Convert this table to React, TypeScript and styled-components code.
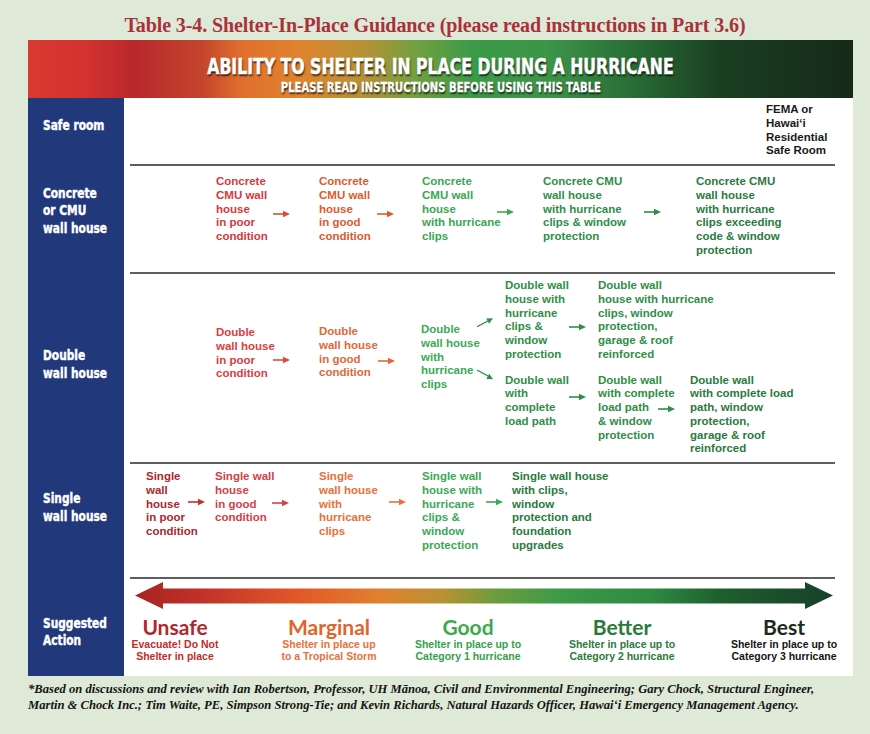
import React from "react";
import styled, { createGlobalStyle } from "styled-components";

const NAVY = "#21387a";

const GlobalStyle = createGlobalStyle`
  html, body {
    margin: 0;
    padding: 0;
    background: #dfe9d7;
  }
  body {
    width: 870px;
    height: 734px;
    overflow: hidden;
    font-family: "Liberation Sans", Arial, sans-serif;
  }
`;

const Page = styled.div`
  width: 870px;
  height: 734px;
  display: flex;
  flex-direction: column;
`;

const Title = styled.h1`
  margin: 0;
  height: 40px;
  box-sizing: border-box;
  padding-top: 10px;
  text-align: center;
  font-family: "Liberation Serif", "Times New Roman", serif;
  font-weight: bold;
  font-size: 20px;
  line-height: 30px;
  letter-spacing: -0.1px;
  color: #a8323a;
`;

const Figure = styled.section`
  margin-left: 28px;
  width: 825px;
  display: flex;
  flex-direction: column;
`;

const Band = styled.header`
  height: 58px;
  box-sizing: border-box;
  padding-top: 16px;
  display: flex;
  flex-direction: column;
  align-items: center;
  background: linear-gradient(
    90deg,
    #d83a30 0%,
    #d4322e 7%,
    #b8282c 13%,
    #c4442c 21%,
    #e0702e 26%,
    #e0842e 33%,
    #b49236 41%,
    #72a040 47%,
    #3a9a48 54%,
    #3d9548 63%,
    #276a34 74%,
    #1a3e22 84%,
    #152a18 100%
  );
`;

const BandTitle = styled.div`
  font-family: "DejaVu Sans", sans-serif;
  font-weight: bold;
  font-size: 21.5px;
  line-height: 22px;
  color: #fff;
  white-space: nowrap;
  transform: scaleX(0.73);
  -webkit-text-stroke: 0.5px #fff;
  text-shadow: 1px 2px 2px rgba(0, 0, 0, 0.75);
`;

const BandSub = styled(BandTitle)`
  margin-top: 2px;
  font-size: 13.5px;
  line-height: 14px;
  transform: scaleX(0.745);
  -webkit-text-stroke: 0.3px #fff;
`;

const Row = styled.div<{ $h: number }>`
  display: grid;
  grid-template-columns: 96px 729px;
  height: ${(p) => p.$h}px;
`;

const Label = styled.div<{ $pt?: number; $pb?: number }>`
  background: ${NAVY};
  display: flex;
  align-items: center;
  box-sizing: border-box;
  padding: ${(p) => p.$pt ?? 0}px 0 ${(p) => p.$pb ?? 0}px 15px;
`;

const LabelText = styled.span`
  display: inline-block;
  white-space: pre;
  color: #fff;
  font-family: "DejaVu Sans", sans-serif;
  font-weight: bold;
  font-size: 14px;
  line-height: 17.5px;
  -webkit-text-stroke: 0.45px #fff;
  transform: scaleX(0.76);
  transform-origin: left center;
`;

const Cell = styled.div`
  background: #fff;
  display: flex;
  flex-direction: column;
  min-width: 0;
`;

const Rule = styled.div`
  flex: none;
  height: 2px;
  margin: 0 18px 0 6px;
  background: #5e5e5e;
`;

const Body = styled.div<{ $pl?: number; $pt?: number }>`
  display: flex;
  align-items: flex-start;
  padding: ${(p) => p.$pt ?? 0}px 0 0 ${(p) => p.$pl ?? 0}px;
`;

const Step = styled.div<{ $w?: number; $c: string; $top?: number }>`
  flex: none;
  width: ${(p) => (p.$w ? `${p.$w}px` : "auto")};
  margin-top: ${(p) => p.$top ?? 0}px;
  color: ${(p) => p.$c};
  white-space: pre;
  font-family: "Liberation Sans", Arial, sans-serif;
  font-weight: bold;
  font-size: 11.5px;
  line-height: 13.75px;
`;

const Slot = styled.div<{ $w: number; $top: number; $pl?: number }>`
  flex: none;
  box-sizing: border-box;
  width: ${(p) => p.$w}px;
  padding: ${(p) => p.$top}px 0 0 ${(p) => p.$pl ?? 0}px;
  display: flex;
  svg {
    display: block;
  }
`;

const Branches = styled.div`
  display: flex;
  flex-direction: column;
  margin-top: 5px;
`;

const Branch = styled.div<{ $top?: number }>`
  display: flex;
  align-items: flex-start;
  margin-top: ${(p) => p.$top ?? 0}px;
`;

const Outcomes = styled.div`
  display: flex;
  margin-top: 7px;
`;

const Outcome = styled.div<{ $w: number }>`
  flex: none;
  width: ${(p) => p.$w}px;
  display: flex;
  flex-direction: column;
  align-items: center;
`;

const Verdict = styled.div<{ $c: string }>`
  color: ${(p) => p.$c};
  font-family: Lato, "Liberation Sans", sans-serif;
  font-weight: 700;
  font-size: 21px;
  line-height: 22px;
  white-space: nowrap;
`;

const Advice = styled.div<{ $c: string }>`
  color: ${(p) => p.$c};
  font-family: "Liberation Sans", Arial, sans-serif;
  font-weight: bold;
  font-size: 10.5px;
  line-height: 12px;
  white-space: pre;
  text-align: center;
`;

const Footnote = styled.p`
  margin: 5px 0 0 28px;
  white-space: pre;
  color: #141414;
  font-family: "Liberation Serif", "Times New Roman", serif;
  font-style: italic;
  font-weight: bold;
  font-size: 12.6px;
  line-height: 16px;
`;

const Arrow: React.FC<{ c: string }> = ({ c }) => (
  <svg width="17" height="8" viewBox="0 0 17 8">
    <path d="M0 4H11" stroke={c} strokeWidth="1.6" />
    <path d="M10 0.8L17 4L10 7.2Z" fill={c} />
  </svg>
);

const Fork: React.FC<{ c: string }> = ({ c }) => (
  <svg width="17" height="66" viewBox="0 0 17 66">
    <path d="M0 10.7L11 5" stroke={c} strokeWidth="1.4" />
    <path d="M16 2.3L12.1 7.8L9.3 2.4Z" fill={c} />
    <path d="M0 54L11 60" stroke={c} strokeWidth="1.4" />
    <path d="M16 63.3L9.3 62.9L12.3 57.7Z" fill={c} />
  </svg>
);

const BigArrow = () => (
  <svg width="698" height="27" viewBox="0 0 698 27" style={{ margin: "3px 0 0 11px", display: "block" }}>
    <defs>
      <linearGradient id="scale" x1="0" x2="1" y1="0" y2="0">
        <stop offset="0" stopColor="#a52520" />
        <stop offset="0.09" stopColor="#c0302a" />
        <stop offset="0.24" stopColor="#e25a28" />
        <stop offset="0.35" stopColor="#e0802e" />
        <stop offset="0.44" stopColor="#b89232" />
        <stop offset="0.52" stopColor="#6a9c3e" />
        <stop offset="0.61" stopColor="#3c9a48" />
        <stop offset="0.74" stopColor="#2e8a42" />
        <stop offset="0.84" stopColor="#1e5e2c" />
        <stop offset="1" stopColor="#17402a" />
      </linearGradient>
    </defs>
    <polygon
      points="0,13.5 28,0 28,6.5 670,6.5 670,0 698,13.5 670,27 670,21.5 28,21.5 28,27"
      fill="url(#scale)"
    />
  </svg>
);

const RED = "#d23a3e";
const DEEP_RED = "#a82a2a";
const ROSE = "#d24048";
const ORANGE = "#e0592e";
const AMBER = "#e8703a";
const GREEN = "#3aa652";
const MID_GREEN = "#2f8e48";
const DARK_GREEN = "#2a7a40";

export default function App() {
  return (
    <Page>
      <GlobalStyle />
      <Title>Table 3-4. Shelter-In-Place Guidance (please read instructions in Part 3.6)</Title>
      <Figure>
        <Band>
          <BandTitle>ABILITY TO SHELTER IN PLACE DURING A HURRICANE</BandTitle>
          <BandSub>PLEASE READ INSTRUCTIONS BEFORE USING THIS TABLE</BandSub>
        </Band>

        <Row $h={66}>
          <Label $pb={10}>
            <LabelText>Safe room</LabelText>
          </Label>
          <Cell>
            <Body $pl={642} $pt={5}>
              <Step $c="#1a1a1a">{"FEMA or\nHawai‘i\nResidential\nSafe Room"}</Step>
            </Body>
          </Cell>
        </Row>

        <Row $h={108}>
          <Label $pb={14}>
            <LabelText>{"Concrete\nor CMU\nwall house"}</LabelText>
          </Label>
          <Cell>
            <Rule />
            <Body $pl={92} $pt={9}>
              <Step $w={57} $c={RED}>{"Concrete\nCMU wall\nhouse\nin poor\ncondition"}</Step>
              <Slot $w={46} $top={35}>
                <Arrow c="#e04a3a" />
              </Slot>
              <Step $w={58} $c={ORANGE}>{"Concrete\nCMU wall\nhouse\nin good\ncondition"}</Step>
              <Slot $w={45} $top={35}>
                <Arrow c={ORANGE} />
              </Slot>
              <Step $w={75} $c={GREEN}>{"Concrete\nCMU wall\nhouse\nwith hurricane\nclips"}</Step>
              <Slot $w={46} $top={33}>
                <Arrow c={GREEN} />
              </Slot>
              <Step $w={101} $c={MID_GREEN}>
                {"Concrete CMU\nwall house\nwith hurricane\nclips & window\nprotection"}
              </Step>
              <Slot $w={52} $top={33}>
                <Arrow c={MID_GREEN} />
              </Slot>
              <Step $c={DARK_GREEN}>
                {"Concrete CMU\nwall house\nwith hurricane\nclips exceeding\ncode & window\nprotection"}
              </Step>
            </Body>
          </Cell>
        </Row>

        <Row $h={190}>
          <Label $pb={5}>
            <LabelText>{"Double\nwall house"}</LabelText>
          </Label>
          <Cell>
            <Rule />
            <Body $pl={92}>
              <Step $w={57} $c="#d8403e" $top={52}>
                {"Double\nwall house\nin poor\ncondition"}
              </Step>
              <Slot $w={46} $top={82}>
                <Arrow c="#e04a3a" />
              </Slot>
              <Step $w={58} $c="#e06838" $top={51}>
                {"Double\nwall house\nin good\ncondition"}
              </Step>
              <Slot $w={44} $top={83} $pl={1}>
                <Arrow c="#e06838" />
              </Slot>
              <Step $w={56} $c="#3aaa55" $top={49}>
                {"Double\nwall house\nwith\nhurricane\nclips"}
              </Step>
              <Slot $w={28} $top={42}>
                <Fork c={MID_GREEN} />
              </Slot>
              <Branches>
                <Branch>
                  <Step $w={64} $c={MID_GREEN}>
                    {"Double wall\nhouse with\nhurricane\nclips &\nwindow\nprotection"}
                  </Step>
                  <Slot $w={29} $top={44}>
                    <Arrow c={MID_GREEN} />
                  </Slot>
                  <Step $c={MID_GREEN}>
                    {"Double wall\nhouse with hurricane\nclips, window\nprotection,\ngarage & roof\nreinforced"}
                  </Step>
                </Branch>
                <Branch $top={12}>
                  <Step $w={64} $c={MID_GREEN}>{"Double wall\nwith\ncomplete\nload path"}</Step>
                  <Slot $w={29} $top={19}>
                    <Arrow c={MID_GREEN} />
                  </Slot>
                  <Step $w={60} $c={MID_GREEN}>
                    {"Double wall\nwith complete\nload path\n& window\nprotection"}
                  </Step>
                  <Slot $w={32} $top={31}>
                    <Arrow c={MID_GREEN} />
                  </Slot>
                  <Step $c={DARK_GREEN}>
                    {"Double wall\nwith complete load\npath, window\nprotection,\ngarage & roof\nreinforced"}
                  </Step>
                </Branch>
              </Branches>
            </Body>
          </Cell>
        </Row>

        <Row $h={115}>
          <Label $pb={24}>
            <LabelText>{"Single\nwall house"}</LabelText>
          </Label>
          <Cell>
            <Rule />
            <Body $pl={22} $pt={6}>
              <Step $w={42} $c={DEEP_RED}>{"Single\nwall\nhouse\nin poor\ncondition"}</Step>
              <Slot $w={27} $top={28}>
                <Arrow c="#c43030" />
              </Slot>
              <Step $w={57} $c={ROSE}>{"Single wall\nhouse\nin good\ncondition"}</Step>
              <Slot $w={47} $top={29}>
                <Arrow c={ROSE} />
              </Slot>
              <Step $w={70} $c={AMBER}>{"Single\nwall house\nwith\nhurricane\nclips"}</Step>
              <Slot $w={33} $top={28}>
                <Arrow c={AMBER} />
              </Slot>
              <Step $w={64} $c="#3aa858">
                {"Single wall\nhouse with\nhurricane\nclips &\nwindow\nprotection"}
              </Step>
              <Slot $w={26} $top={28}>
                <Arrow c="#3aa858" />
              </Slot>
              <Step $c={DARK_GREEN}>
                {"Single wall house\nwith clips,\nwindow\nprotection and\nfoundation\nupgrades"}
              </Step>
            </Body>
          </Cell>
        </Row>

        <Row $h={99}>
          <Label $pt={11}>
            <LabelText>{"Suggested\nAction"}</LabelText>
          </Label>
          <Cell>
            <Rule />
            <BigArrow />
            <Outcomes>
              <Outcome $w={102}>
                <Verdict $c="#b4262c">Unsafe</Verdict>
                <Advice $c="#c42a2a">{"Evacuate! Do Not\nShelter in place"}</Advice>
              </Outcome>
              <Outcome $w={206}>
                <Verdict $c="#e2642a">Marginal</Verdict>
                <Advice $c="#e8703a">{"Shelter in place up\nto a Tropical Storm"}</Advice>
              </Outcome>
              <Outcome $w={72}>
                <Verdict $c="#3caa4c">Good</Verdict>
                <Advice $c="#34a04a">{"Shelter in place up to\nCategory 1 hurricane"}</Advice>
              </Outcome>
              <Outcome $w={236}>
                <Verdict $c="#2a7a3c">Better</Verdict>
                <Advice $c="#2a7a3c">{"Shelter in place up to\nCategory 2 hurricane"}</Advice>
              </Outcome>
              <Outcome $w={88}>
                <Verdict $c="#1c2a1c">Best</Verdict>
                <Advice $c="#141414">{"Shelter in place up to\nCategory 3 hurricane"}</Advice>
              </Outcome>
            </Outcomes>
          </Cell>
        </Row>
      </Figure>
      <Footnote>
        {
          "*Based on discussions and review with Ian Robertson, Professor, UH Mānoa, Civil and Environmental Engineering; Gary Chock, Structural Engineer,\nMartin & Chock Inc.; Tim Waite, PE, Simpson Strong-Tie; and Kevin Richards, Natural Hazards Officer, Hawai‘i Emergency Management Agency."
        }
      </Footnote>
    </Page>
  );
}
